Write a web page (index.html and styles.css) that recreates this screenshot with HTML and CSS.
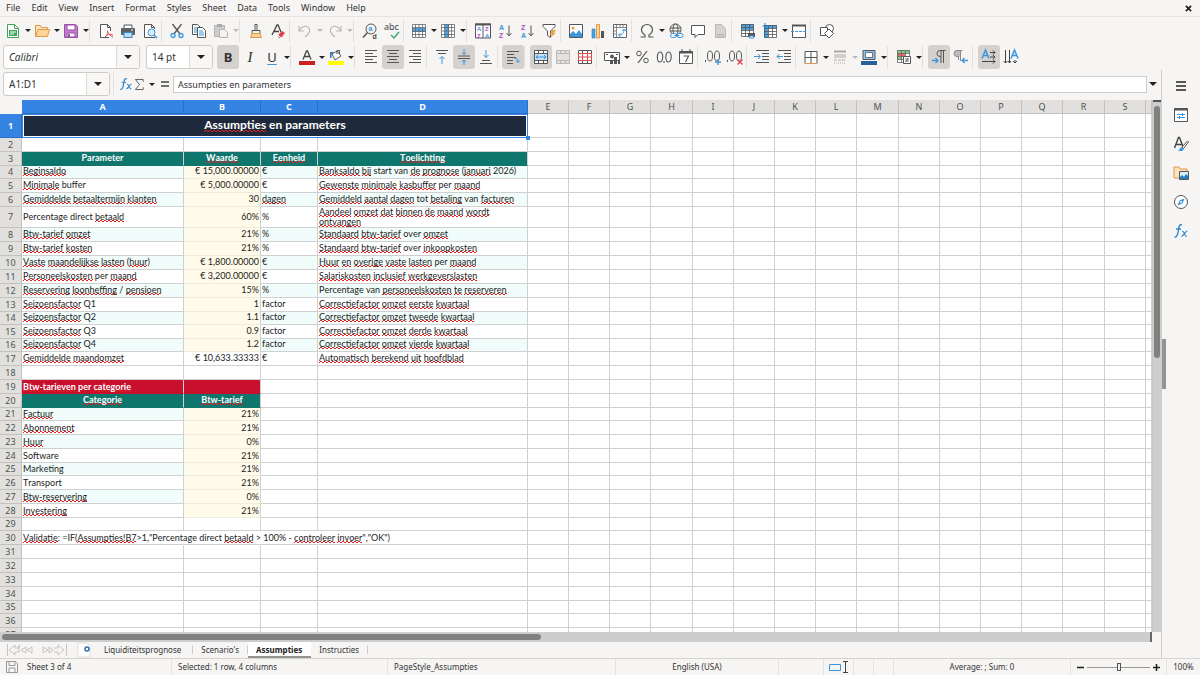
FILE: index.html
```html
<!DOCTYPE html>
<html lang="nl">
<head>
<meta charset="utf-8">
<meta name="viewport" content="width=device-width, initial-scale=1">
<title>Assumpties</title>
<link rel="stylesheet" href="styles.css">
</head>
<body>
<header class="menubar">
  <nav class="menus">
    <button>File</button><button>Edit</button><button>View</button><button>Insert</button><button>Format</button><button>Styles</button><button>Sheet</button><button>Data</button><button>Tools</button><button>Window</button><button>Help</button>
  </nav>
  <button class="close" aria-label="Close document"><svg viewBox="0 0 8 8" width="7" height="7"><path d="M1 1l6 6M7 1L1 7" stroke="#222" stroke-width="2"/></svg></button>
</header>

<div class="toolbar standard" role="toolbar" aria-label="Standard">
  <button class="tool" aria-label="New"><svg viewBox="0 0 16 16"><path d="M2.500 1.500h7l4 4v9h-11z" fill="#fff" stroke="#3fa45b"/><path d="M9.500 1.500v4h4" fill="none" stroke="#3fa45b"/><path d="M4 7h8v6H4z" fill="#3fa45b"/><path d="M5 9h6M5 11h4" stroke="#fff"/></svg></button><button class="drop" aria-label="New options"></button>
  <button class="tool" aria-label="Open"><svg viewBox="0 0 16 16"><path d="M1.500 13.500v-11h5l1 2h6v3" fill="#fbe3bd" stroke="#e2974a"/><path d="M1.500 13.500l2.500-7h11.500l-2 7z" fill="#fbd596" stroke="#e2974a"/></svg></button><button class="drop" aria-label="Open options"></button>
  <button class="tool" aria-label="Save"><svg viewBox="0 0 16 16"><path d="M1.500 1.500h11l2 2v11h-13z" fill="#c77bd0" stroke="#9a4fa8"/><path d="M4 2h8v5H4zM4 10h8v4H4z" fill="#fff" stroke="#9a4fa8"/><path d="M6 11v3" stroke="#9a4fa8" stroke-width="2"/></svg></button><button class="drop" aria-label="Save options"></button>
  <i class="sep"></i>
  <button class="tool" aria-label="Export as PDF"><svg viewBox="0 0 16 16"><path d="M11 14.500H2.500v-13h7l3 3V8M9.500 1.500v3h3" fill="#fff" stroke="#555"/><path d="M7 14c2-2 3-4 2.500-6.500M7 14c3-3 5-3 8-2M9.500 8c1 3 3 5 5.500 6" fill="none" stroke="#e0525a"/></svg></button>
  <button class="tool" aria-label="Print"><svg viewBox="0 0 16 16"><path d="M4 5V2h8v3" fill="#fff" stroke="#555"/><rect x="1" y="5" width="14" height="7" rx="1" fill="#5a6268"/><rect x="4" y="9.500" width="8" height="5" fill="#b9ddf7" stroke="#3a87c2"/><path d="M11 7h2" stroke="#fff"/></svg></button>
  <button class="tool" aria-label="Print preview"><svg viewBox="0 0 16 16"><path d="M13 14.500H2.500v-13h7l3 3V6M9.500 1.500v3h3" fill="#fff" stroke="#555"/><circle cx="9.500" cy="9.500" r="3.500" fill="#d8edfb" stroke="#3a96dd"/><path d="M12 12l3 3" stroke="#3a96dd" stroke-width="1.500"/></svg></button>
  <i class="sep"></i>
  <button class="tool" aria-label="Cut"><svg viewBox="0 0 16 16" fill="none"><path d="M3.500 1l7.500 10M12.500 1L5 11" stroke="#555" stroke-width="1.300"/><circle cx="4" cy="12.500" r="2" stroke="#3a96dd" stroke-width="1.300"/><circle cx="12" cy="12.500" r="2" stroke="#3a96dd" stroke-width="1.300"/></svg></button>
  <button class="tool" aria-label="Copy"><svg viewBox="0 0 16 16"><path d="M1.500 1.500h5l3 3v7h-8z" fill="#fff" stroke="#555"/><path d="M3 5h4M3 7h3M3 9h3" stroke="#3a96dd"/><path d="M6.500 4.500h5l3 3v7h-8z" fill="#fff" stroke="#555"/><path d="M8 8h4M8 10h5M8 12h5" stroke="#3a96dd"/></svg></button>
  <button class="tool" aria-label="Paste" disabled><svg viewBox="0 0 16 16"><path d="M1.500 2.500h10v11h-10z" fill="#ccc" stroke="#b5b3b0"/><path d="M4 1h5v3H4z" fill="#aaa"/><path d="M6.500 6.500h5l3 3v5h-8z" fill="#f3f2f0" stroke="#b5b3b0"/></svg></button><button class="drop" aria-label="Paste options" disabled></button>
  <i class="sep"></i>
  <button class="tool" aria-label="Clone formatting"><svg viewBox="0 0 16 16"><path d="M7 1.500h2v6H7z" fill="#fff" stroke="#555"/><path d="M4 7.500h8v3H4z" fill="#eee" stroke="#555"/><path d="M4 10.500h8l1.500 4h-11z" fill="#fbd596" stroke="#e2974a"/></svg></button>
  <button class="tool" aria-label="Clear formatting"><svg viewBox="0 0 16 16" fill="none"><path d="M2 12L7 2h1l3 7M4 8.500h5" stroke="#444" stroke-width="1.300"/><path d="M8 12l4-4 3 2-4 5H9z" fill="#e0434b"/><path d="M8 12l3 3" stroke="#fff"/></svg></button>
  <i class="sep"></i>
  <button class="tool" aria-label="Undo" disabled><svg viewBox="0 0 16 16" fill="none"><path d="M2 3v5h5M2.500 7.500C5 3 10 2 12 5s0 6-4 9" stroke="#bbb9b6" stroke-width="1.200"/></svg></button><button class="drop" aria-label="Undo list" disabled></button><span class="pad"></span>
  <button class="tool" aria-label="Redo" disabled><svg viewBox="0 0 16 16" fill="none"><path d="M14 3v5H9M13.500 7.500C11 3 6 2 4 5s0 6 4 9" stroke="#bbb9b6" stroke-width="1.200"/></svg></button><button class="drop" aria-label="Redo list" disabled></button>
  <i class="sep"></i>
  <button class="tool" aria-label="Find and replace"><svg viewBox="0 0 16 16" fill="none"><circle cx="9" cy="6" r="5" stroke="#555"/><path d="M5.500 9.500L1 14.500" stroke="#555" stroke-width="1.500"/><text x="6.500" y="8" font-size="7" fill="#3a96dd" font-weight="bold">a</text><text x="10.500" y="16" font-size="7" fill="#444" font-weight="bold">d</text></svg></button>
  <button class="tool" aria-label="Spelling"><svg viewBox="0 0 16 16" fill="none"><text class="ui" x="0" y="7" font-size="9" fill="#444">abc</text><path d="M7 12l3 3 5-6" stroke="#3fa47b" stroke-width="1.500"/></svg></button>
  <i class="sep"></i>
  <button class="tool" aria-label="Row"><svg viewBox="0 0 16 16"><path d="M1.500 1.500h13v13h-13z" fill="#fff"/><path d="M1 5h14v4H1z" fill="#4ba3e3"/><path d="M1.500 1.500h13v13h-13zM1.500 4.500h13M1.500 8.500h13M1.500 11.500h13M4.500 1.500v13M8 1.500v13M11.500 1.500v13" fill="none" stroke="#666" stroke-width=".8"/></svg></button><button class="drop" aria-label="Row options"></button>
  <button class="tool" aria-label="Column"><svg viewBox="0 0 16 16"><path d="M1.500 1.500h13v13h-13z" fill="#fff"/><path d="M5 1h4v14H5z" fill="#4ba3e3"/><path d="M1.500 1.500h13v13h-13zM1.500 4.500h13M1.500 8h13M1.500 11.500h13M4.500 1.500v13M8.500 1.500v13M11.500 1.500v13" fill="none" stroke="#666" stroke-width=".8"/></svg></button><button class="drop" aria-label="Column options"></button>
  <i class="sep"></i>
  <button class="tool" aria-label="Sort"><svg viewBox="0 0 16 16"><path d="M.5 1h15v14H.5z" fill="#fff" stroke="#555"/><path d="M0 1.500h16" stroke="#555" stroke-width="2"/><path d="M8 1v14" stroke="#555"/><g font-size="6" font-weight="bold"><text x="2" y="8" fill="#3a96dd">A</text><text x="2" y="14.500" fill="#b04ac0">Z</text><text x="10" y="8" fill="#b04ac0">Z</text><text x="10" y="14.500" fill="#3a96dd">A</text></g></svg></button>
  <button class="tool" aria-label="Sort ascending"><svg viewBox="0 0 16 16"><g font-size="7" font-weight="bold"><text x="2" y="7" fill="#3a96dd">A</text><text x="2" y="15" fill="#b04ac0">Z</text></g><path d="M12 2.500v10M9.500 10l2.500 3 2.500-3" fill="none" stroke="#555"/></svg></button>
  <button class="tool" aria-label="Sort descending"><svg viewBox="0 0 16 16"><g font-size="7" font-weight="bold"><text x="2" y="7" fill="#b04ac0">Z</text><text x="2" y="15" fill="#3a96dd">A</text></g><path d="M12 2.500v10M9.500 10l2.500 3 2.500-3" fill="none" stroke="#555"/></svg></button>
  <button class="tool" aria-label="AutoFilter"><svg viewBox="0 0 16 16"><path d="M2 1.500h12v2L9.500 8v6.500l-3-2V8L2 3.500z" fill="#fff" stroke="#555"/><path d="M11 7h4l-2 3h2l-6 5 2-4H9z" fill="#f0a03c"/></svg></button>
  <i class="sep"></i>
  <button class="tool" aria-label="Insert image"><svg viewBox="0 0 16 16"><path d="M1.500 1.500h13v13h-13z" fill="#fff" stroke="#555"/><path d="M2 14v-3l3-3 3 3 3-4 3 4v3z" fill="#3a96dd"/><circle cx="5" cy="5" r="1.500" fill="#f0a03c"/></svg></button>
  <button class="tool" aria-label="Insert chart"><svg viewBox="0 0 16 16"><path d="M2 6h3v9H2z" fill="#4ba3e3" stroke="#2b7cb8" stroke-width=".6"/><path d="M6.500 1.500h3V15h-3z" fill="#fbd596" stroke="#e2974a"/><path d="M11 8h3v7h-3z" fill="#555"/></svg></button>
  <button class="tool" aria-label="Insert pivot table"><svg viewBox="0 0 16 16"><path d="M1.500 1.500h13v13h-13z" fill="#fff" stroke="#666"/><path d="M4.500 2v12M2 4.500h12M8 2v2M11 2v2M2 8h2M2 11h2" stroke="#888"/><path d="M6.500 12c4 0 5.500-2 5.500-5.500M10 8l2-2 2 2M8.500 10l-2 2 2 2" fill="none" stroke="#3a96dd"/></svg></button>
  <i class="sep"></i>
  <button class="tool" aria-label="Special character"><svg viewBox="0 0 16 16"><path d="M1.500 14H6v-2C3.500 10.500 2.500 9 2.500 6.500a5.500 5 0 0 1 11 0C13.500 9 12.500 10.500 10 12v2h4.500" fill="none" stroke="#555" stroke-width="1.200"/></svg></button><button class="drop" aria-label="Character options"></button>
  <button class="tool" aria-label="Hyperlink"><svg viewBox="0 0 16 16" fill="none"><circle cx="7.500" cy="6.500" r="5.500" stroke="#555"/><ellipse cx="7.500" cy="6.500" rx="2.500" ry="5.500" stroke="#555"/><path d="M2 5h11M2 8h11" stroke="#555"/><rect x="2.500" y="10.500" width="6" height="4" rx="2" fill="#f6f5f3" stroke="#3a96dd"/><rect x="9" y="10.500" width="6" height="4" rx="2" fill="#f6f5f3" stroke="#3a96dd"/><path d="M6.500 12.500h5" stroke="#3a96dd"/></svg></button>
  <button class="tool" aria-label="Comment"><svg viewBox="0 0 16 16"><path d="M1.500 2.500h13v9H8l-3 3v-3H1.500z" fill="#fff" stroke="#555"/></svg></button>
  <button class="tool" aria-label="Headers and footers" disabled><svg viewBox="0 0 16 16"><path d="M3.500 1.500h6l4 4v9h-10z" fill="#d5d3d0" stroke="#bbb9b6"/><path d="M5 11.500h7M5 13h7" stroke="#bbb9b6"/></svg></button>
  <i class="sep wide"></i>
  <button class="tool" aria-label="Print area"><svg viewBox="0 0 16 16"><path d="M1.500 1.500h12v12h-12z" fill="#fff"/><path d="M1 1h13v6H1z" fill="#4ba3e3"/><path d="M1.500 1.500h12v12h-12zM1.500 4.500h12M1.500 7.500h12M1.500 10.500h12M5.500 1.500v12M9.500 1.500v12" fill="none" stroke="#555" stroke-width=".8"/><path d="M8 10h7v4H8z" fill="#555"/><path d="M9.500 13h4v2h-4z" fill="#fff" stroke="#3a96dd"/></svg></button>
  <button class="tool" aria-label="Freeze rows and columns"><svg viewBox="0 0 16 16"><path d="M2.500 2.500h12v12h-12z" fill="#fff"/><path d="M2 2h13v3H6v10H2z" fill="#4ba3e3"/><path d="M2.500 2.500h12v12h-12zM2.500 5.500h12M2.500 8.500h12M2.500 11.500h12M6.500 2.500v12M10.500 2.500v12" fill="none" stroke="#555" stroke-width=".8"/><path d="M3 0v6M.5 3h5" stroke="#2a7bc0"/></svg></button><button class="drop" aria-label="Freeze options"></button>
  <button class="tool" aria-label="Split window"><svg viewBox="0 0 16 16"><path d="M1.500 2.500h13v12h-13z" fill="#fff" stroke="#555"/><path d="M1 2.500h14" stroke="#555" stroke-width="2"/><path d="M0 8.500h16" stroke="#3a96dd" stroke-dasharray="3 1"/></svg></button>
  <i class="sep wide"></i>
  <button class="tool" aria-label="Draw functions"><svg viewBox="0 0 16 16"><circle cx="10.500" cy="5.500" r="4" fill="#fff" stroke="#555"/><path d="M1.500 4.500h7v8h-7z" fill="#fff" stroke="#555"/><path d="M10 6l4.500 4.500L10 15l-4.500-4.500z" fill="#fff" stroke="#555"/></svg></button>
</div>

<div class="toolbar formatting" role="toolbar" aria-label="Formatting">
  <div class="combo font-name"><input class="italic" aria-label="Font name" value="Calibri"><button aria-label="Font list"></button></div>
  <div class="combo font-size"><input aria-label="Font size" value="14 pt"><button aria-label="Size list"></button></div>
  <button class="tool on letter bold">B</button>
  <button class="tool letter slant">I</button>
  <button class="tool letter under">U</button><button class="drop" aria-label="Underline options"></button>
  <i class="sep"></i>
  <button class="tool" aria-label="Font colour"><svg viewBox="0 0 16 16"><path d="M4 10.500L7.500 2h1L12 10.500M5.500 7.500h5" fill="none" stroke="#444" stroke-width="1.300"/><path d="M0 12h16v4H0z" fill="#c9211e"/></svg></button><button class="drop" aria-label="Font colour options"></button>
  <button class="tool" aria-label="Background colour"><svg viewBox="0 0 16 16"><path d="M4 5l5-3 4 5-6 4z" fill="#fff" stroke="#555"/><path d="M2 9V3h4l-2.500 2.500V9z" fill="#2a7bc0"/><path d="M9 5V1.500h2.500V5" fill="none" stroke="#555"/><path d="M0 12h16v4H0z" fill="#ffff00"/></svg></button><button class="drop" aria-label="Background options"></button>
  <i class="sep"></i>
  <button class="tool" aria-label="Align left"><svg viewBox="0 0 16 16"><path d="M2 1.500h12M2 4.500h8M2 7.500h12M2 10.500h8M2 13.500h12" stroke="#555"/></svg></button>
  <button class="tool on" aria-label="Align centre"><svg viewBox="0 0 16 16"><path d="M2 1.500h12M4 4.500h8M2 7.500h12M4 10.500h8M2 13.500h12" stroke="#555"/></svg></button>
  <button class="tool" aria-label="Align right"><svg viewBox="0 0 16 16"><path d="M2 1.500h12M6 4.500h8M2 7.500h12M6 10.500h8M2 13.500h12" stroke="#555"/></svg></button>
  <i class="sep"></i>
  <button class="tool" aria-label="Align top"><svg viewBox="0 0 16 16" fill="none"><path d="M2 1.500h12M4 4.500h8" stroke="#555"/><path d="M8 15V7.500M5.500 10L8 7.500l2.500 2.500" stroke="#3a96dd"/></svg></button>
  <button class="tool on" aria-label="Centre vertically"><svg viewBox="0 0 16 16" fill="none"><path d="M2 7h12M2 9.500h12" stroke="#555"/><path d="M8 0v5.500M6 3.500l2 2 2-2M8 16v-5M6 13l2-2 2 2" stroke="#3a96dd"/></svg></button>
  <button class="tool" aria-label="Align bottom"><svg viewBox="0 0 16 16" fill="none"><path d="M2 14.500h12M4 11.500h8" stroke="#555"/><path d="M8 1v7.500M5.500 6L8 8.500 10.500 6" stroke="#3a96dd"/></svg></button>
  <i class="sep"></i>
  <button class="tool on" aria-label="Wrap text"><svg viewBox="0 0 16 16" fill="none"><path d="M2 2.500h12M2 5.500h7M2 8.500h9M2 11.500h6M2 14.500h6" stroke="#555"/><path d="M9 9c3 0 4 1 4 4M11 11.500l2 2 2-2" stroke="#3a96dd"/></svg></button>
  <i class="sep wide"></i>
  <button class="tool on" aria-label="Merge and centre"><svg viewBox="0 0 16 16"><path d="M1.500 1.500h13v13h-13z" fill="#fff" stroke="#555"/><path d="M1.500 4.500h13M1.500 11.500h13M5.500 1.500v3M10.500 1.500v3M5.500 11.500v3M10.500 11.500v3" stroke="#555"/><path d="M2 5h12v6H2z" fill="#c5e4f9"/><path d="M3 8h10M5 6L3 8l2 2M11 6l2 2-2 2" fill="none" stroke="#3a96dd"/></svg></button>
  <button class="tool" aria-label="Merge cells" disabled><svg viewBox="0 0 16 16"><path d="M1.500 1.500h13v13h-13zM1.500 4.500h13M1.500 11.500h13M5.500 1.500v3M10.500 1.500v3M5.500 11.500v3M10.500 11.500v3" fill="#e4e2df" stroke="#bbb9b6"/></svg></button>
  <button class="tool" aria-label="Unmerge cells"><svg viewBox="0 0 16 16"><path d="M1.500 1.500h13v13h-13zM5.500 1.500v3M10.500 1.500v3M5.500 11.500v3M10.500 11.500v3" fill="#fff" stroke="#555"/><path d="M1.500 4.500h13v7h-13zM5.500 4.500v7M10.500 4.500v7M1.500 8h13" fill="none" stroke="#df4b4b"/></svg></button>
  <i class="sep"></i>
  <button class="tool" aria-label="Currency"><svg viewBox="0 0 16 16"><path d="M.5 3.500h15v8H.5z" fill="#fff" stroke="#555"/><path d="M2 5.500h2M12 5.500h2" stroke="#555"/><circle cx="8" cy="7.500" r="2" fill="#555"/><path d="M6 11h3v4H6zM10 8h3v7h-3zM14 11h2v4h-2z" fill="#555"/></svg></button><button class="drop" aria-label="Currency options"></button>
  <span class="pad"></span><button class="tool" aria-label="Percent"><svg viewBox="0 0 16 16" fill="none" stroke="#555"><path d="M13 2L4 14" stroke-width="1.200"/><circle cx="5" cy="4.500" r="2.300"/><circle cx="12" cy="11.500" r="2.300"/></svg></button>
  <button class="tool" aria-label="Number"><svg viewBox="0 0 16 16" fill="none" stroke="#555" stroke-width="1.100"><ellipse cx="4" cy="8" rx="2.700" ry="5"/><ellipse cx="12.500" cy="8" rx="2.700" ry="5"/><path d="M8 12v2"/></svg></button>
  <button class="tool" aria-label="Date"><svg viewBox="0 0 16 16"><path d="M1.500 2.500h13v12h-13z" fill="#fff" stroke="#555"/><path d="M1 3.500h14" stroke="#555" stroke-width="2"/><path d="M4 0v3M12 0v3" stroke="#555"/><path d="M5.500 7h5L7.500 13" fill="none" stroke="#555" stroke-width="1.200"/></svg></button>
  <i class="sep"></i>
  <button class="tool" aria-label="Add decimal place"><svg viewBox="0 0 16 16" fill="none" stroke="#555"><path d="M.5 11v2"/><ellipse cx="5" cy="7" rx="2.500" ry="5"/><ellipse cx="12" cy="7" rx="2.500" ry="5"/><path d="M13 10v6M10 13h6" stroke="#3a96dd" stroke-width="1.400"/></svg></button>
  <button class="tool" aria-label="Delete decimal place"><svg viewBox="0 0 16 16" fill="none" stroke="#555"><path d="M.5 11v2"/><ellipse cx="5" cy="7" rx="2.500" ry="5"/><ellipse cx="12" cy="7" rx="2.500" ry="5"/><path d="M10.500 10.500l5 5M15.500 10.500l-5 5" stroke="#df4b4b" stroke-width="1.400"/></svg></button>
  <i class="sep"></i>
  <button class="tool" aria-label="Increase indent"><svg viewBox="0 0 16 16" fill="none"><path d="M2 1.500h13M8 4.500h7M8 7.500h7M8 10.500h7M2 13.500h13" stroke="#555"/><path d="M0 7.500h6M4 5l2.500 2.500L4 10" stroke="#3a96dd"/></svg></button>
  <button class="tool" aria-label="Decrease indent"><svg viewBox="0 0 16 16" fill="none"><path d="M2 1.500h13M8 4.500h7M8 7.500h7M8 10.500h7M2 13.500h13" stroke="#555"/><path d="M1 7.500h6M3.500 5L1 7.500 3.500 10" stroke="#3a96dd"/></svg></button>
  <i class="sep"></i>
  <button class="tool" aria-label="Borders"><svg viewBox="0 0 16 16"><path d="M2 2.500h12v12H2zM8 2.500v12M2 8.500h12" fill="#fff" stroke="#555"/><path d="M2 14.500h12" stroke="#e2974a"/></svg></button><button class="drop" aria-label="Border options"></button>
  <button class="tool" aria-label="Border style" disabled><svg viewBox="0 0 16 16" stroke="#aaa8a5"><path d="M2 2.500h12" stroke-width="2"/><path d="M2 6h12M2 8h12"/><path d="M2 11h12" stroke-dasharray="3 1"/><path d="M2 14h12" stroke-dasharray="1 1"/></svg></button><button class="drop" aria-label="Border style options" disabled></button>
  <button class="tool" aria-label="Border colour"><svg viewBox="0 0 16 16"><path d="M2 1.500h12v9H2z" fill="#8cc6f2" stroke="#555"/><path d="M4.500 3.500h7v5h-7z" fill="#fff" stroke="#555" stroke-width=".8"/><path d="M0 12h16v4H0z" fill="#2a6099"/></svg></button><button class="drop" aria-label="Border colour options"></button>
  <i class="sep"></i>
  <button class="tool" aria-label="Conditional formatting"><svg viewBox="0 0 16 16"><path d="M1.500 1.500h12v12h-12z" fill="#fff"/><path d="M1 1h13v3H1z" fill="#83c98b"/><path d="M1 4h8v4H1z" fill="#e86b6b"/><path d="M1 8h5v3H1z" fill="#83c98b"/><path d="M1.500 1.500h12v12h-12zM1.500 4.500h12M1.500 7.500h12M1.500 10.500h12M5.500 1.500v12M9.500 1.500v12" fill="none" stroke="#666" stroke-width=".8"/><path d="M7.500 7.500h7v7h-7z" fill="#fff" stroke="#555"/><path d="M9 10h4M9 12h4M12 9l-2 4" stroke="#555" stroke-width=".8"/></svg></button><button class="drop" aria-label="Conditional options"></button>
  <i class="sep"></i>
  <button class="tool on" aria-label="Left to right"><svg viewBox="0 0 16 16" fill="none"><path d="M14.500 1.500H9a3 3 0 0 0 0 6h1M10 1.500V14M12.500 1.500V14" stroke="#555"/><path d="M1 11.500h6M4.500 9L7 11.500 4.500 14" stroke="#3a96dd" stroke-width="1.300"/></svg></button>
  <button class="tool" aria-label="Right to left"><svg viewBox="0 0 16 16" fill="none"><path d="M7 1.500H4a3 3 0 0 0 0 6h3z" fill="#bbb"/><path d="M9.500 1.500H4a3 3 0 0 0 0 6h1.500M5.500 7v4M7.500 1.500V12" stroke="#888"/><path d="M9 11.500h6M11.500 9L9 11.500l2.500 2.500" stroke="#3a96dd" stroke-width="1.300"/></svg></button>
  <i class="sep wide"></i>
  <button class="tool on" aria-label="Text horizontal"><svg viewBox="0 0 16 16" fill="none"><path d="M1 9.500L4.500 1 8 9.500M2.500 6.500h4" stroke="#3a96dd" stroke-width="1.500"/><path d="M9 3.500h5M12 1.500l2 2-2 2M9 8h5M12 6l2 2-2 2M1 12.500h13M12 10.500l2 2-2 2" stroke="#444"/></svg></button>
  <button class="tool" aria-label="Text vertical"><svg viewBox="0 0 16 16" fill="none"><path d="M8 9.500L11.500 1 15 9.500M9.500 6.500h4" stroke="#3a96dd" stroke-width="1.500"/><path d="M2.500 1v13M.5 12l2 2 2-2M6.500 1v13M5 12l1.500 2L8 12M12 11v3M10 12l2 2 2-2" stroke="#444"/></svg></button>
</div>

<div class="workspace">
  <main class="editor">
    <div class="formula-bar">
      <div class="combo name-box"><input aria-label="Name box" value="A1:D1"><button aria-label="Named ranges"></button></div>
      <i class="sep"></i>
      <button class="fx" aria-label="Function wizard"><svg viewBox="0 0 16 16" width="14" height="14" fill="none" stroke="#2f87cf"><path d="M9 2C6 1 6 4 5.500 7S4 15 1.500 14M3 6h5" stroke-width="1.400"/><path d="M9 8c3 0 2 6 5 5.500M14.500 8C12 8 11 13 8.500 13.500" stroke-width="1.200"/></svg></button>
      <button class="sigma" aria-label="Select function"><svg viewBox="0 0 12 14" width="11" height="13" fill="none" stroke="#555"><path d="M10 4V1.500H1.500L6 7l-4.500 5.500H10V10"/></svg></button><button class="drop" aria-label="Function list"></button>
      <button class="equals" aria-label="Formula"><svg viewBox="0 0 10 8" width="10" height="8"><path d="M1 2h8M1 6h8" stroke="#444" stroke-width="1.500"/></svg></button>
      <input class="formula" aria-label="Input line" value="Assumpties en parameters">
      <button class="expand" aria-label="Expand formula bar"></button>
    </div>
    <div class="grid-row">
      <div class="grid"><table id="sheet"></table></div>
      <div class="vscroll"><span class="thumb"></span></div>
    </div>
    <div class="hscroll"><span class="thumb"></span></div>
    <div class="tabs">
      <div class="tab-nav" aria-hidden="true"><svg viewBox="0 0 62 14" width="62" height="14" fill="none" stroke="#c6c4c1"><path d="M1.500 1v12M13 2v3H9V2L3 7l6 5V9h4zM20 4v6l-5-3zM26 4v6l-5-3zM37 4v6l5-3zM43 4v6l4-3zM48 5h4V2l6 5-6 5V9h-4M60.500 1v12"/></svg></div>
      <button class="add" aria-label="Add sheet"><svg viewBox="0 0 14 16" width="14" height="16"><path d="M1 1h9l3 3v11H1z" fill="#fff" stroke="#d0ceca" stroke-width=".6"/><circle cx="10" cy="7" r="2" fill="#fff" stroke="#2a6fb5" stroke-width="1.500"/></svg></button>
      <button class="tab first">Liquiditeitsprognose</button><button class="tab">Scenario's</button><button class="tab current">Assumpties</button><button class="tab">Instructies</button>
    </div>
  </main>
  <aside class="sidebar">
    <button aria-label="Sidebar settings"><svg viewBox="0 0 16 16"><path d="M3 4h10M3 8h10M3 12h10" stroke="#222" stroke-width="1.500"/></svg></button>
    <button aria-label="Properties"><svg viewBox="0 0 16 16"><path d="M1.500 1.500h13v13h-13z" fill="#fff" stroke="#555"/><path d="M1 2.500h14" stroke="#555" stroke-width="2"/><path d="M4 7.500h8M4 10.500h8M9.500 6v3M6.500 9v3" stroke="#3a96dd"/></svg></button>
    <button aria-label="Styles"><svg viewBox="0 0 16 16" fill="none"><path d="M1.500 12L5.500 1.500h1L10.500 12M3 8.500h6" stroke="#444" stroke-width="1.400"/><path d="M14.500 5L9 11l1.500 1.500L15.500 6z" fill="#fff" stroke="#555"/><path d="M9 11c-2 0-2 3-4 3.500 2 1 6 1 5.500-2z" fill="#3a96dd"/></svg></button>
    <button aria-label="Gallery"><svg viewBox="0 0 16 16"><path d="M1 13V2h5l1 2h7v9z" fill="#fbe3bd" stroke="#e2974a"/><path d="M6.500 6.500h9v8h-9z" fill="#d9eefb" stroke="#555"/><path d="M7 14v-2l2-2 2 2 2-3 2 2v3z" fill="#2a7bc0"/></svg></button>
    <button aria-label="Navigator"><svg viewBox="0 0 16 16"><circle cx="8" cy="8" r="6.500" fill="#fff" stroke="#555"/><path d="M11.500 4.500l-2 5-5 2 2-5z" fill="#3a96dd"/><circle cx="8" cy="8" r="1" fill="#fff"/></svg></button>
    <button aria-label="Functions"><svg viewBox="0 0 16 16" fill="none" stroke="#2f87cf"><path d="M9 2C6 1 6 4 5.500 7S4 15 1.500 14M3 6h5" stroke-width="1.400"/><path d="M9 8c3 0 2 6 5 5.500M14.500 8C12 8 11 13 8.500 13.500" stroke-width="1.200"/></svg></button>
    <span class="handle"></span>
  </aside>
</div>

<footer class="status">
  <span class="sheet-no"><svg viewBox="0 0 12 12" width="12" height="12" fill="none" stroke="#999"><path d="M.5.5h9l2 2v9H.5zM3 .5v4h6v-4M3 11.500V7h6v4.500"/></svg>Sheet 3 of 4</span>
  <span>Selected: 1 row, 4 columns</span>
  <span>PageStyle_Assumpties</span>
  <span class="center">English (USA)</span>
  <span></span>
  <span class="center modes"><svg viewBox="0 0 20 12" width="20" height="12" fill="none"><path d="M.5 3.500h11v6H.5z" stroke="#3a96dd"/><path d="M14 .5h5M14 11.500h5M16.500 .5v11" stroke="#444"/></svg></span>
  <span></span><span></span>
  <span class="center">Average: ; Sum: 0</span>
  <span class="zoom"><button aria-label="Zoom out"><svg viewBox="0 0 8 8" width="7" height="7"><path d="M0 4h8" stroke="#222" stroke-width="1.800"/></svg></button><input type="range" min="0" max="100" value="50" aria-label="Zoom"><button aria-label="Zoom in"><svg viewBox="0 0 8 8" width="7" height="7"><path d="M0 4h8M4 0v8" stroke="#222" stroke-width="1.800"/></svg></button></span>
  <span class="center">100%</span>
</footer>
<script src="sheet.js"></script>
</body>
</html>
```

FILE: styles.css
```css
* { box-sizing: border-box; }

body {
  margin: 0;
  height: 100vh;
  display: flex;
  flex-direction: column;
  overflow: hidden;
  background: #f6f5f3;
  color: #333;
  font: 9px/12px "Noto Sans", sans-serif;
}

button, input { font: inherit; color: inherit; }
button { padding: 0; border: 0; background: none; }
svg { overflow: visible; }
svg text { font-family: "Liberation Sans", sans-serif; }
svg text.ui { font-family: "Noto Sans", sans-serif; }

/* Menu bar */
.menubar {
  display: flex;
  justify-content: space-between;
  align-items: center;
  height: 17px;
  padding: 0 8px 0 6px;
  border-bottom: 1px solid #e6e4e1;
}
.menus { display: flex; gap: 11px; }
.close { display: flex; }

/* Toolbars */
.toolbar { display: flex; align-items: center; }
.standard { height: 27px; padding-left: 2px; }
.formatting { height: 26px; padding-left: 3px; }
.tool {
  flex: none;
  width: 22px;
  height: 24px;
  display: flex;
  align-items: center;
  justify-content: center;
  border-radius: 3px;
}
.tool svg { width: 16px; height: 16px; }
.tool.on { background: #d5d2ce; }
.letter { font-size: 13px; line-height: 24px; }
.bold { font-weight: bold; }
.slant { font-family: "Liberation Serif", serif; font-style: italic; font-size: 15px; }
.under { text-decoration: underline #3a96dd; text-underline-offset: 2px; }
.drop { flex: none; width: 7px; height: 24px; display: flex; align-items: center; justify-content: center; }
.drop::before, .expand::before, .combo button::before {
  content: "";
  border: 3px solid transparent;
  border-top: 3px solid #222;
  border-bottom: 0;
}
.drop:disabled::before { border-top-color: #bbb; }
.sep { flex: none; width: 5px; height: 22px; border-left: 1px solid #e3e1de; }
.drop + .sep, .sep.wide { width: 6px; }
.pad { flex: none; width: 1px; }

.combo {
  flex: none;
  display: flex;
  height: 24px;
  border: 1px solid #cfccc8;
  border-radius: 3px;
  background: #fff;
  overflow: hidden;
}
.combo input { flex: 1; min-width: 0; border: 0; padding: 0 5px; background: none; outline: 0; font-size: 10px; }
.combo button {
  width: 23px;
  display: flex;
  align-items: center;
  justify-content: center;
  border-left: 1px solid #dcdad6;
  background: #f8f7f5;
}
.combo button::before, .expand::before { border-width: 4px 4px 0; }
.font-name { width: 137px; margin-right: 6px; }
.font-size { width: 67px; margin-right: 4px; }
.name-box { width: 107px; margin-right: 3px; }
.italic { font-style: italic; }

/* Editor and sidebar */
.workspace { flex: 1; min-height: 0; display: flex; }
.editor { flex: 1; min-width: 0; display: flex; flex-direction: column; border-right: 1px solid #cfcdca; }
.formula-bar { display: flex; align-items: center; height: 30px; padding: 0 3px 2px; }
.fx { display: flex; padding-left: 1px; }
.sigma { display: flex; margin: 0 3px 0 1px; }
.equals { display: flex; margin: 0 3px 0 5px; }
.formula { flex: 1; min-width: 0; height: 17px; padding: 0 4px; border: 1px solid #d0cecb; background: #fff; outline: 0; }
.expand { width: 11px; height: 17px; display: flex; align-items: center; justify-content: center; }

.grid-row { flex: 1; min-height: 0; display: flex; }
.grid { flex: 1; min-width: 0; overflow: hidden; background: #fff; border-right: 1px solid #c4c4c4; }
.vscroll { width: 8px; background: #cdcdcd; border-top: 2px solid #555; padding: 4px 1px 0; }
.vscroll .thumb { display: block; height: 48%; border-radius: 3px; background: #7f817f; }
.hscroll { height: 10px; padding: 2px; background: #cdcdcd; margin-right: 9px; border-right: 2px solid #666; }
.hscroll .thumb { display: block; width: 47%; height: 6px; border-radius: 3px; background: #7f817f; }

.sidebar {
  position: relative;
  width: 38px;
  display: flex;
  flex-direction: column;
  align-items: center;
  gap: 13px;
  padding-top: 8px;
}
.sidebar button { display: flex; }
.sidebar svg { width: 16px; height: 16px; }
.handle { position: absolute; left: 0; top: 50%; width: 4px; height: 50px; margin-top: -25px; background: #949494; }

/* Spreadsheet */
#sheet { width: 100%; table-layout: fixed; border-collapse: separate; border-spacing: 0; }
.c-head { width: 22px; }
.c-a { width: 162px; }
.c-b { width: 77px; }
.c-c { width: 57px; }
.c-d { width: 210px; }
.c-n { width: 41px; }
.c-w { width: 42px; }
#sheet th, #sheet td {
  height: 14px;
  padding: 0;
  border: 0 solid #d0d0d0;
  border-width: 0 1px 1px 0;
  overflow: visible;
  white-space: nowrap;
}
#sheet tr.short td, #sheet tr.short th { height: 13px; }
#sheet th {
  background: #e1e0de;
  border-color: #c4c2bf;
  color: #505050;
  font-weight: normal;
  line-height: 12px;
}
#sheet th.sel { background: #3584e4; border-color: #2a6fc4; color: #fff; font-weight: bold; }
#sheet th.corner { background: #f6f5f3; border-color: #f6f5f3; }
#sheet td {
  padding: 0 1px;
  color: #1c1c1c;
  font: 9px/10px Lato, sans-serif;
  font-kerning: none;
  text-align: left;
}
#sheet tr.upper td { padding-bottom: 2px; }
#sheet tr.title td, #sheet tr.title th { height: 24px; }
#sheet tr.tall td, #sheet tr.tall th { height: 21px; }
#sheet tr.tall td { white-space: normal; padding-bottom: 0; }
#sheet td.num { text-align: right; }
#sheet td.mint { background: #f0fdfa; }
#sheet td.cream { background: #fffbeb; border-bottom-color: #f0ecde; }
#sheet td.head { background: #0f766e; color: #fff; font-weight: bold; text-align: center; border-bottom-color: #0f766e; padding-bottom: 2px; }
#sheet td.red { background: #c8102e; color: #fff; font-weight: bold; border-bottom-color: #c8102e; }
#sheet td.spill { border-right-color: transparent; }
#sheet td.banner {
  position: relative;
  border: 0;
  padding-bottom: 2px;
  background: #1e293b;
  color: #fff;
  font-size: 12px;
  line-height: 16px;
  font-weight: bold;
  text-align: center;
  box-shadow: inset 0 0 0 1px #3584e4, inset 0 0 0 2px #fff;
}
.grip { position: absolute; right: -2px; bottom: -2px; width: 4px; height: 4px; background: #3584e4; }

/* Spelling mark: a fine zigzag under the word */
u {
  text-decoration: none;
  background: url("data:image/svg+xml,%3Csvg xmlns='http://www.w3.org/2000/svg' width='4' height='2'%3E%3Cpath d='M0 2L2 0L4 2' fill='none' stroke='%23e02020'/%3E%3C/svg%3E") left bottom repeat-x;
}

/* Sheet tabs */
.tabs { display: flex; height: 16px; padding-left: 6px; font-size: 8px; }
.tab-nav { display: flex; align-items: center; margin-right: 9px; }
.add { display: flex; margin-right: 5px; }
.tab { padding: 0 9px 0 8px; line-height: 13px; border-bottom: 2px solid transparent; background: linear-gradient(#cfcdca, #cfcdca) right 3px / 1px 9px no-repeat; }
.tab.first { padding-right: 12px; }
.tab.current { background: #fff; border-bottom-color: #949494; font-weight: bold; color: #222; }

/* Status bar */
.status {
  display: grid;
  grid-template-columns: 172fr 216fr 228fr 163fr 45fr 30fr 20fr 20fr 177fr 96fr 33fr;
  height: 17px;
  border-top: 1px solid #d5d3d0;
  font-size: 8px;
  line-height: 16px;
}
.status > span { display: flex; align-items: center; padding: 0 6px; border-right: 1px solid #e6e4e1; white-space: nowrap; min-width: 0; }
.status > span:last-child { border: 0; }
.status .center { justify-content: center; padding: 0; }
.sheet-no { gap: 9px; }
.status .zoom { gap: 3px; }
.zoom button { display: flex; }
.zoom input { flex: 1; min-width: 0; height: 12px; margin: 0; appearance: none; background: linear-gradient(#999, #999) center / 100% 1px no-repeat; }
.zoom input::-webkit-slider-thumb { appearance: none; width: 4px; height: 8px; border: 1px solid #555; background: #eee; }
```

FILE: sheet.js
```js
// Words between underscores are unknown to the spelling checker.
const cells = {
  3: ["Parameter", "_Waarde_", "_Eenheid_", "_Toelichting_"],
  4: ["_Beginsaldo_", "€ 15,000.00000", "€", "_Banksaldo_ _bij_ start van _de_ _prognose_ (_januari_ 2026)"],
  5: ["_Minimale_ buffer", "€ 5,000.00000", "€", "_Gewenste_ _minimale_ _kasbuffer_ per _maand_"],
  6: ["_Gemiddelde_ _betaaltermijn_ _klanten_", "30", "_dagen_", "_Gemiddeld_ _aantal_ _dagen_ tot _betaling_ van _facturen_"],
  7: ["Percentage direct _betaald_", "60%", "%", "_Aandeel_ _omzet_ _dat_ _binnen_ _de_ _maand_ _wordt_ _ontvangen_"],
  8: ["_Btw-tarief_ _omzet_", "21%", "%", "_Standaard_ _btw-tarief_ over _omzet_"],
  9: ["_Btw-tarief_ _kosten_", "21%", "%", "_Standaard_ _btw-tarief_ over _inkoopkosten_"],
  10: ["_Vaste_ _maandelijkse_ _lasten_ (_huur_)", "€ 1,800.00000", "€", "_Huur_ _en_ _overige_ _vaste_ _lasten_ per _maand_"],
  11: ["_Personeelskosten_ per _maand_", "€ 3,200.00000", "€", "_Salariskosten_ _inclusief_ _werkgeverslasten_"],
  12: ["_Reservering_ _loonheffing_ / _pensioen_", "15%", "%", "Percentage van _personeelskosten_ _te_ _reserveren_"],
  13: ["_Seizoensfactor_ Q1", "1", "factor", "_Correctiefactor_ _omzet_ _eerste_ _kwartaal_"],
  14: ["_Seizoensfactor_ Q2", "1.1", "factor", "_Correctiefactor_ _omzet_ _tweede_ _kwartaal_"],
  15: ["_Seizoensfactor_ Q3", "0.9", "factor", "_Correctiefactor_ _omzet_ _derde_ _kwartaal_"],
  16: ["_Seizoensfactor_ Q4", "1.2", "factor", "_Correctiefactor_ _omzet_ _vierde_ _kwartaal_"],
  17: ["_Gemiddelde_ _maandomzet_", "€ 10,633.33333", "€", "_Automatisch_ _berekend_ _uit_ _hoofdblad_"],
  19: ["_Btw-tarieven_ per _categorie_"],
  20: ["_Categorie_", "_Btw-tarief_"],
  21: ["_Factuur_", "21%"],
  22: ["_Abonnement_", "21%"],
  23: ["_Huur_", "0%"],
  24: ["Software", "21%"],
  25: ["Marketing", "21%"],
  26: ["Transport", "21%"],
  27: ["_Btw-reservering_", "0%"],
  28: ["_Investering_", "21%"],
  30: ["_Validatie_: =IF(_Assumpties!B7_>1,\"Percentage direct _betaald_ > 100% - _controleer_ _invoer_\",\"OK\")"]
};
const columns = "ABCDEFGHIJKLMNOPQRS".split("").concat("");
const shortRows = [4, 14, 16, 21, 25, 29, 35];
const rowCount = 37;

const markup = s => s.replace(/>/g, "&gt;").replace(/_([^_]+)_/g, "<u>$1</u>");

function cellClass(row, col) {
  if ((row === 3 && col < 4) || (row === 20 && col < 2)) return "head";
  if (row === 19 && col < 2) return "red";
  if (row === 30 && col < 3) return "spill";
  const upper = row >= 4 && row <= 17;
  const lower = row >= 21 && row <= 28;
  if (col === 1 && (upper || lower)) return row === 17 ? "num" : "num cream";
  if (upper && row % 2 === 0 && col < 4) return "mint";
  if (lower && row % 2 === 1 && col === 0) return "mint";
  return "";
}

function rowClass(row) {
  if (row === 1) return "title";
  const names = [];
  if (row >= 4 && row <= 17) names.push("upper");
  if (row === 7) names.push("tall");
  if (shortRows.includes(row)) names.push("short");
  return names.join(" ");
}

let html = "<colgroup><col class='c-head'><col class='c-a'><col class='c-b'><col class='c-c'><col class='c-d'>";
for (let i = 1; i <= 15; i++) html += `<col class="${i % 5 === 4 ? "c-w" : "c-n"}">`;
html += "<col></colgroup><thead><tr><th class='corner'></th>";
columns.forEach((name, i) => { html += `<th scope="col" class="${i < 4 ? "sel" : ""}">${name}</th>`; });
html += "</tr></thead><tbody>";
for (let row = 1; row <= rowCount; row++) {
  html += `<tr class="${rowClass(row)}"><th scope="row" class="${row === 1 ? "sel" : ""}">${row}</th>`;
  let col = 0;
  if (row === 1) {
    html += `<td class="banner" colspan="4">${markup("_Assumpties_ en parameters")}<span class="grip"></span></td>`;
    col = 4;
  }
  for (; col < columns.length; col++) {
    const text = (cells[row] || [])[col] || "";
    html += `<td class="${cellClass(row, col)}">${markup(text)}</td>`;
  }
  html += "</tr>";
}
document.getElementById("sheet").innerHTML = html + "</tbody>";
```
